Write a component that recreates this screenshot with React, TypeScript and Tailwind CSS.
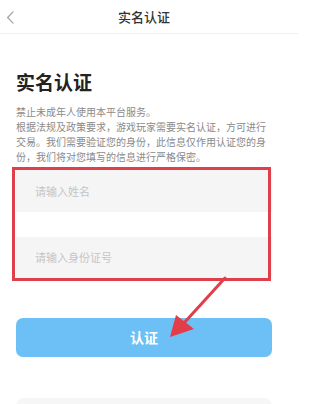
import React from "react";

export default function App() {
  return (
    <div
      className="relative w-[298px] h-[404px] overflow-hidden bg-white"
      style={{ fontFamily: '"Noto Sans CJK SC", "Noto Sans", sans-serif' }}
    >
      {/* header */}
      <div className="h-[34px] border-b border-[#efefef] flex">
        <div className="relative w-[288px] h-full flex items-center justify-center">
          <svg
            className="absolute left-[6px] top-[11px]"
            width="9"
            height="13"
            viewBox="0 0 9 13"
            fill="none"
          >
            <path d="M7 0.8 L1.6 6.5 L7 12.2" stroke="#a5a5a5" strokeWidth="1.2" strokeLinecap="round" strokeLinejoin="round" />
          </svg>
          <span className="text-[13px] leading-none text-[#333] font-medium">实名认证</span>
        </div>
      </div>

      {/* content */}
      <div className="w-[288px] px-4">
        <h1 className="mt-[34px] text-[19px] leading-[28px] font-semibold text-[#222]">实名认证</h1>
        <div className="mt-[8px] text-[10px] leading-[15px] text-[#8a8a8a]">
          <p>禁止未成年人使用本平台服务。</p>
          <p>根据法规及政策要求，游戏玩家需要实名认证，方可进行交易。我们需要验证您的身份，此信息仅作用认证您的身份，我们将对您填写的信息进行严格保密。</p>
        </div>

        <div className="relative mt-[6px]">
          <div className="h-[42px] bg-[#f5f5f6] flex items-center pl-[19px] text-[11px] text-[#c5c5c5]">请输入姓名</div>
          <div className="mt-[25px] h-[41px] bg-[#f5f5f6] flex items-center pl-[19px] text-[11px] text-[#c5c5c5]">请输入身份证号</div>
          <div className="absolute -top-[3px] -bottom-[3px] -left-[4px] right-[1px] border-[3px] border-[#de3f4b] pointer-events-none" />
        </div>

        <button className="mt-[40px] w-full h-[39px] rounded-[7px] bg-[#6cc0f6] text-white text-[14px] font-semibold flex items-center justify-center">
          认证
        </button>

        <div className="mt-[41px] h-[40px] rounded-t-[8px] bg-[#f6f6f6]" />
      </div>

      {/* annotation arrow */}
      <svg
        className="absolute left-0 top-0 pointer-events-none"
        width="298"
        height="404"
        viewBox="0 0 298 404"
      >
        <line x1="225" y1="278" x2="184" y2="323" stroke="#e23d49" strokeWidth="3" strokeLinecap="round" />
        <polygon points="170,337 176,315 194,329" fill="#e23d49" />
      </svg>
    </div>
  );
}
